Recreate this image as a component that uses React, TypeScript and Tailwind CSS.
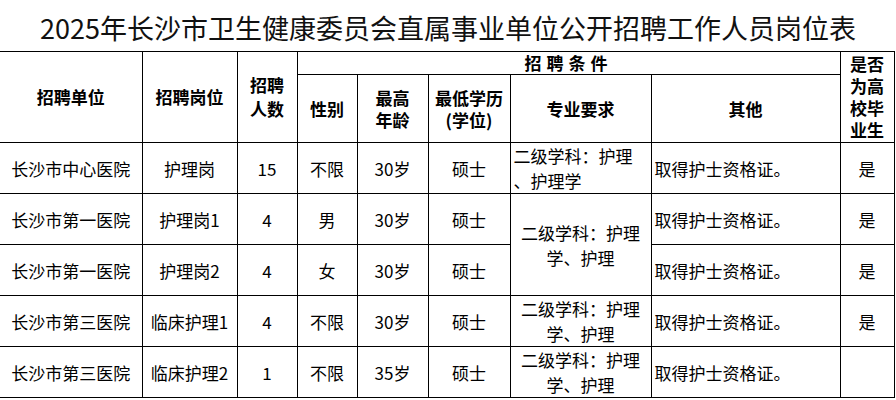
const font = 'font-["Microsoft_YaHei","Noto_Sans_CJK_SC",sans-serif]';

type Row = {
  unit: string;
  post: string;
  count: string;
  gender: string;
  age: string;
  edu: string;
  major?: { lines: string[]; left?: boolean; span?: number };
  other: string;
  grad: string;
};

const rows: Row[] = [
  { unit: '长沙市中心医院', post: '护理岗', count: '15', gender: '不限', age: '30岁', edu: '硕士', major: { lines: ['二级学科：护理', '、护理学'], left: true }, other: '取得护士资格证。', grad: '是' },
  { unit: '长沙市第一医院', post: '护理岗1', count: '4', gender: '男', age: '30岁', edu: '硕士', major: { lines: ['二级学科：护理', '学、护理'], span: 2 }, other: '取得护士资格证。', grad: '是' },
  { unit: '长沙市第一医院', post: '护理岗2', count: '4', gender: '女', age: '30岁', edu: '硕士', other: '取得护士资格证。', grad: '是' },
  { unit: '长沙市第三医院', post: '临床护理1', count: '4', gender: '不限', age: '30岁', edu: '硕士', major: { lines: ['二级学科：护理', '学、护理'] }, other: '取得护士资格证。', grad: '是' },
  { unit: '长沙市第三医院', post: '临床护理2', count: '1', gender: '不限', age: '35岁', edu: '硕士', major: { lines: ['二级学科：护理', '学、护理'] }, other: '取得护士资格证。', grad: '' },
];

const th = 'border border-black p-0 text-center align-middle font-bold text-[17px] leading-[22px]';
const td = 'border border-black p-0 text-center align-middle text-[17px] leading-[25px]';

export default function App() {
  return (
    <div className={`w-[896px] h-[400px] overflow-hidden bg-white text-black ${font}`}>
      {/* Title */}
      <div className="h-[51px] pt-[3px] flex items-center justify-center">
        <h1 className="text-[27px] leading-none text-[#111] whitespace-nowrap">
          2025年长沙市卫生健康委员会直属事业单位公开招聘工作人员岗位表
        </h1>
      </div>

      <table className="w-[894px] table-fixed border-collapse">
        <colgroup>
          <col className="w-[142px]" />
          <col className="w-[95px]" />
          <col className="w-[60px]" />
          <col className="w-[60px]" />
          <col className="w-[71px]" />
          <col className="w-[82px]" />
          <col className="w-[141px]" />
          <col className="w-[189px]" />
          <col className="w-[54px]" />
        </colgroup>
        <thead>
          <tr className="h-[23px]">
            <th rowSpan={2} className={`${th} border-l-0`}>招聘单位</th>
            <th rowSpan={2} className={th}>招聘岗位</th>
            <th rowSpan={2} className={`${th} leading-[24px]`}>招聘<br />人数</th>
            <th colSpan={5} className={`${th} tracking-[5px] leading-[20px]`}>招聘条件</th>
            <th rowSpan={2} className={`${th} px-[8px] leading-[22px]`}>是否<br />为高<br />校毕<br />业生</th>
          </tr>
          <tr className="h-[68px]">
            <th className={th}>性别</th>
            <th className={th}>最高<br />年龄</th>
            <th className={th}>最低学历<br />(学位)</th>
            <th className={th}>专业要求</th>
            <th className={th}>其他</th>
          </tr>
        </thead>
        <tbody>
          {rows.map((r, i) => (
            <tr key={i} className="h-[51px]">
              <td className={`${td} border-l-0`}>{r.unit}</td>
              <td className={td}>{r.post}</td>
              <td className={td}>{r.count}</td>
              <td className={td}>{r.gender}</td>
              <td className={td}>{r.age}</td>
              <td className={td}>{r.edu}</td>
              {r.major && (
                <td
                  rowSpan={r.major.span ?? 1}
                  className={`${td} ${r.major.left ? 'text-left pl-[3px]' : ''}`}
                >
                  {r.major.lines.map((l, j) => (
                    <div key={j}>{l}</div>
                  ))}
                </td>
              )}
              <td className={`${td} text-left pl-[3px]`}>{r.other}</td>
              <td className={td}>{r.grad}</td>
            </tr>
          ))}
        </tbody>
      </table>
    </div>
  );
}
